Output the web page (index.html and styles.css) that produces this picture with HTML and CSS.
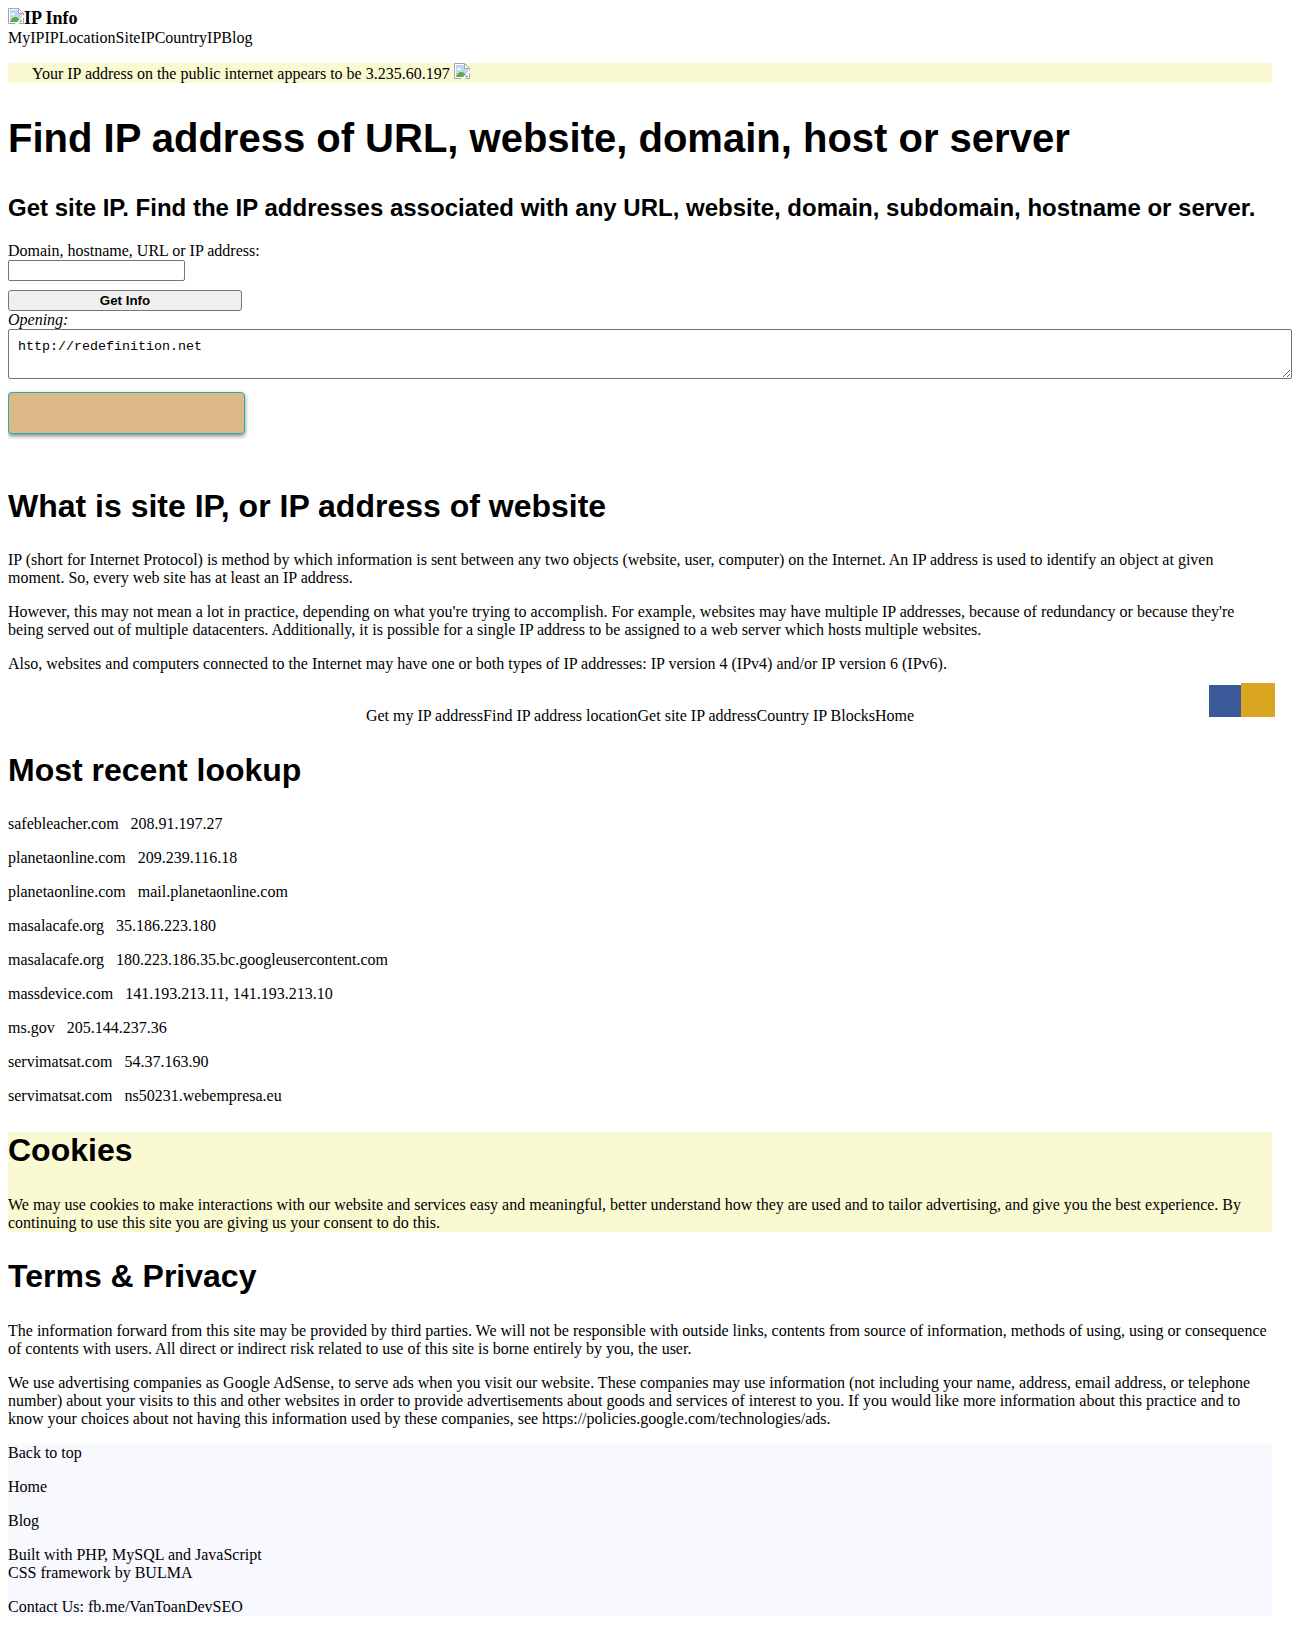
FILE: index.html
```html
<!DOCTYPE html>
<html lang="en">
<head>
<meta charset="utf-8">
<meta name="viewport" content="width=device-width, initial-scale=1">
<title>Find IP address of URL, website, domain, host or server</title>
<link rel="stylesheet" href="styles.css">
</head>
<body id="top">
<svg class="defs" width="0" height="0" aria-hidden="true">
  <symbol id="picture" viewBox="0 0 16 16">
    <path d="M.5 15.5V.5h10l5 5v10z" fill="#fff"/>
    <path d="M2 14V2h8v4h4v8z" fill="#c1d3f7"/>
    <path d="M3 6.500c0-1.500 2-2 2.500-.8C7 5.200 7.500 7 6.500 7H3.500z" fill="#fff"/>
    <path d="M2 14c1-3 3-5 5-5 2.500 0 5 2 7 5z" fill="#5aac3b"/>
    <path d="M7 16l9-9v2l-7 7z" fill="#fff"/>
    <path d="M7.500 15.500H.5V.5h10l5 5v2M10.500.5v5h5M15.500 10v5.500H11" fill="none" stroke="#a3a3a3"/>
  </symbol>
</svg>

<header>
  <a class="brand" href="#top"><svg class="icon" aria-hidden="true"><use href="#picture"/></svg><b>IP Info</b></a>
  <nav class="links"><a href="#">MyIP</a><a href="#">IPLocation</a><a href="#">SiteIP</a><a href="#">CountryIP</a><a href="#">Blog</a></nav>
</header>

<p class="notice">Your IP address on the public internet appears to be 3.235.60.197 <svg class="icon" aria-hidden="true"><use href="#picture"/></svg></p>

<main>
  <h1>Find IP address of URL, website, domain, host or server</h1>
  <h2 class="subtitle">Get site IP. Find the IP addresses associated with any URL, website, domain, subdomain, hostname or server.</h2>

  <form class="lookup">
    <label for="host">Domain, hostname, URL or IP address:</label>
    <input class="host" id="host" type="text">
    <button class="submit" type="button">Get Info</button>
    <label class="opening" for="result">Opening:</label>
    <textarea class="result" id="result">http://redefinition.net</textarea>
    <button class="action" type="button" aria-label="Open"></button>
  </form>

  <section>
    <h2>What is site IP, or IP address of website</h2>
    <p>IP (short for Internet Protocol) is method by which information is sent between any two objects (website, user, computer) on the Internet. An IP address is used to identify an object at given moment. So, every web site has at least an IP address.</p>
    <p>However, this may not mean a lot in practice, depending on what you're trying to accomplish. For example, websites may have multiple IP addresses, because of redundancy or because they're being served out of multiple datacenters. Additionally, it is possible for a single IP address to be assigned to a web server which hosts multiple websites.</p>
    <p>Also, websites and computers connected to the Internet may have one or both types of IP addresses: IP version 4 (IPv4) and/or IP version 6 (IPv6).</p>
  </section>

  <div class="toolbar">
    <nav class="links tools"><a href="#">Get my IP address</a><a href="#">Find IP address location</a><a href="#">Get site IP address</a><a href="#">Country IP Blocks</a><a href="#">Home</a></nav>
    <div class="share"><a class="share-blue" href="#" aria-label="Facebook"></a><a class="share-gold" href="#top" aria-label="Top"></a></div>
  </div>

  <section>
    <h2>Most recent lookup</h2>
    <p><a href="#">safebleacher.com</a><span class="value">208.91.197.27</span></p>
    <p><a href="#">planetaonline.com</a><span class="value">209.239.116.18</span></p>
    <p><a href="#">planetaonline.com</a><span class="value">mail.planetaonline.com</span></p>
    <p><a href="#">masalacafe.org</a><span class="value">35.186.223.180</span></p>
    <p><a href="#">masalacafe.org</a><span class="value">180.223.186.35.bc.googleusercontent.com</span></p>
    <p><a href="#">massdevice.com</a><span class="value">141.193.213.11, 141.193.213.10</span></p>
    <p><a href="#">ms.gov</a><span class="value">205.144.237.36</span></p>
    <p><a href="#">servimatsat.com</a><span class="value">54.37.163.90</span></p>
    <p><a href="#">servimatsat.com</a><span class="value">ns50231.webempresa.eu</span></p>
  </section>

  <section class="cookies">
    <h2>Cookies</h2>
    <p>We may use cookies to make interactions with our website and services easy and meaningful, better understand how they are used and to tailor advertising, and give you the best experience. By continuing to use this site you are giving us your consent to do this.</p>
  </section>

  <section>
    <h2>Terms &amp; Privacy</h2>
    <p>The information forward from this site may be provided by third parties. We will not be responsible with outside links, contents from source of information, methods of using, using or consequence of contents with users. All direct or indirect risk related to use of this site is borne entirely by you, the user.</p>
    <p>We use advertising companies as Google AdSense, to serve ads when you visit our website. These companies may use information (not including your name, address, email address, or telephone number) about your visits to this and other websites in order to provide advertisements about goods and services of interest to you. If you would like more information about this practice and to know your choices about not having this information used by these companies, see https://policies.google.com/technologies/ads.</p>
  </section>
</main>

<footer>
  <p><a href="#top">Back to top</a></p>
  <p><a href="#">Home</a></p>
  <p><a href="#">Blog</a></p>
  <p>Built with PHP, MySQL and JavaScript<br>CSS framework by BULMA</p>
  <p>Contact Us: <a href="#">fb.me/VanToanDevSEO</a></p>
</footer>
</body>
</html>
```
FILE: styles.css
```css
body {
  margin: 8px 0 16px 8px;
  padding-right: 20px;
  font: 16px/18px "Liberation Serif", "Times New Roman", serif;
  color: #000;
  background: #fff;
}

a {
  color: inherit;
  text-decoration: none;
}

p {
  margin: 16px 0;
}

h1,
h2 {
  margin: 0.83em 0;
  font-family: "Liberation Sans", Arial, sans-serif;
  font-weight: bold;
}

h1 {
  font-size: 40px;
  line-height: 45px;
}

h2 {
  font-size: 32px;
  line-height: 37px;
}

.subtitle {
  font-size: 24px;
  line-height: 28px;
}

.defs {
  display: none;
}

.icon {
  width: 16px;
  height: 16px;
}

.brand {
  display: flex;
  font-size: 18px;
  line-height: 21px;
}

.links {
  display: flex;
  flex-wrap: wrap;
}

.notice {
  padding-left: 24px;
  background: #fafad2;
}

.lookup {
  display: flex;
  flex-direction: column;
  align-items: flex-start;
}

.host,
.submit {
  box-sizing: border-box;
  height: 21px;
  border: 1px solid #767676;
}

.host {
  width: 177px;
  padding: 1px 2px;
  border-radius: 2px;
}

.submit {
  width: 234px;
  margin-top: 9px;
  padding: 1px 6px;
  border-radius: 3px;
  font-family: "Liberation Sans", Arial, sans-serif;
  font-weight: bold;
  color: #000;
  background: #efefef;
}

.opening {
  font-style: italic;
}

.result {
  width: 100%;
  height: 30px;
  padding: 9px;
  border: 1px solid #767676;
  border-radius: 2px;
  overflow: hidden;
  font-family: "Liberation Mono", "Courier New", monospace;
}

.action {
  width: 237px;
  height: 42px;
  margin: 13px 0 27px;
  border: 1px solid #20b2aa;
  border-radius: 4px;
  background: #deb887;
  box-shadow: 0 2px 4px rgba(0, 0, 0, 0.5);
}

.toolbar {
  display: grid;
  grid-template-columns: 1fr auto 1fr;
  margin-top: -6px;
  min-height: 42px;
}

.tools {
  grid-column: 2;
  align-self: end;
}

.share {
  display: flex;
  align-items: flex-end;
  justify-self: end;
  align-self: start;
  margin-right: -3px;
}

.share-blue {
  width: 32px;
  height: 32px;
  background: #3b5998;
}

.share-gold {
  width: 34px;
  height: 34px;
  background: #daa520;
}

.value {
  margin-left: 12px;
}

.cookies {
  background: #fafad2;
}

footer {
  background: #f8f8ff;
}
```
